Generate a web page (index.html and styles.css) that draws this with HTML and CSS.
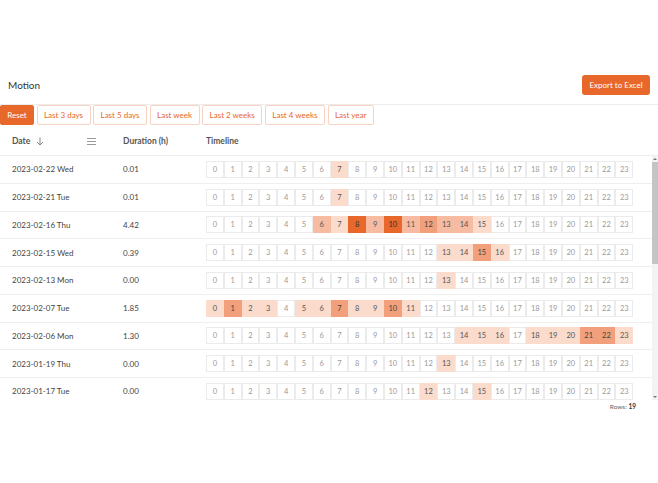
FILE: index.html
```html
<!DOCTYPE html>
<html lang="en">
<head>
<meta charset="UTF-8" />
<title>Motion</title>
<link rel="stylesheet" href="styles.css">
</head>
<body>

<div class="toolbar">
  <span class="title">Motion</span>
  <button class="export-btn">Export to Excel</button>
</div>

<div class="filters">
  <button class="filter active">Reset</button>
  <button class="filter">Last 3 days</button>
  <button class="filter">Last 5 days</button>
  <button class="filter">Last week</button>
  <button class="filter">Last 2 weeks</button>
  <button class="filter">Last 4 weeks</button>
  <button class="filter">Last year</button>
</div>

<div class="table">
  <div class="table-head">
    <div class="th th-date">
      <span>Date</span>
      <svg class="sort-icon" width="8" height="9" viewBox="0 0 8 9"><path d="M4 0.5V8M1 5l3 3 3-3" fill="none" stroke="#888" stroke-width="1"/></svg>
      <svg class="menu-icon" width="9" height="7" viewBox="0 0 9 7"><path d="M0 0.5h9M0 3.5h9M0 6.5h9" stroke="#999" stroke-width="1"/></svg>
    </div>
    <div class="th">Duration (h)</div>
    <div class="th">Timeline</div>
  </div>
  <div class="table-wrap">
    <div class="table-body" id="rows"></div>
    <div class="scrollbar">
      <span class="sb-arrow up"></span>
      <span class="sb-thumb"></span>
      <span class="sb-track"></span>
      <span class="sb-arrow down"></span>
    </div>
  </div>
</div>

<div class="footer">Rows: <b>19</b></div>

<script>
  // hour -> intensity level (1..4)
  const data = [
    ['2023-02-22 Wed', '0.01', {7: 1}],
    ['2023-02-21 Tue', '0.01', {7: 1}],
    ['2023-02-16 Thu', '4.42', {6: 2, 7: 1, 8: 4, 9: 2, 10: 4, 11: 2, 12: 3, 13: 2, 14: 2, 15: 1}],
    ['2023-02-15 Wed', '0.39', {13: 1, 14: 1, 15: 3, 16: 1}],
    ['2023-02-13 Mon', '0.00', {13: 1}],
    ['2023-02-07 Tue', '1.85', {0: 1, 1: 3, 2: 1, 3: 1, 5: 1, 6: 1, 7: 3, 8: 1, 9: 1, 10: 3, 11: 1}],
    ['2023-02-06 Mon', '1.30', {14: 1, 15: 1, 16: 1, 18: 1, 19: 1, 20: 1, 21: 3, 22: 3, 23: 1}],
    ['2023-01-19 Thu', '0.00', {13: 1}],
    ['2023-01-17 Tue', '0.00', {12: 1, 15: 1}],
    ['2023-01-16 Mon', '0.02', {9: 1}],
    ['2023-01-12 Thu', '0.00', {14: 1}],
    ['2023-01-10 Tue', '0.41', {8: 1, 9: 2, 10: 1}],
    ['2023-01-09 Mon', '0.00', {}],
    ['2023-01-05 Thu', '0.12', {16: 1, 17: 1}],
    ['2023-01-03 Tue', '0.00', {11: 1}],
    ['2022-12-29 Thu', '0.07', {13: 1, 14: 1}],
    ['2022-12-22 Thu', '0.00', {}],
    ['2022-12-20 Tue', '0.25', {7: 1, 8: 2}],
    ['2022-12-19 Mon', '0.00', {15: 1}]
  ];

  const body = document.getElementById('rows');
  data.forEach(([date, dur, hours]) => {
    let cells = '';
    for (let h = 0; h < 24; h++) {
      const lvl = hours[h] ? ' lvl' + hours[h] : '';
      cells += `<span class="hour${lvl}">${h}</span>`;
    }
    body.insertAdjacentHTML('beforeend',
      `<div class="row"><div class="td">${date}</div><div class="td">${dur}</div><div class="td"><div class="timeline">${cells}</div></div></div>`);
  });
</script>

</body>
</html>
```

FILE: styles.css
```css
* {
  box-sizing: border-box;
}

body {
  margin: 0;
  font-family: Lato, 'Open Sans', sans-serif;
  color: #444;
  background: #fff;
}

button {
  font-family: inherit;
  cursor: pointer;
}

/* Top bar */
.toolbar {
  margin-top: 66px;
  height: 39px;
  padding: 0 8px;
  display: flex;
  justify-content: space-between;
  align-items: center;
  border-bottom: 1px solid #ececec;
}

.title {
  font-size: 10px;
  color: #333;
}

.export-btn {
  width: 68px;
  height: 20px;
  background: #e8672a;
  color: #fff;
  border: none;
  border-radius: 3px;
  font-size: 8px;
  padding: 0;
}

/* Period filters */
.filters {
  display: flex;
  gap: 2.5px;
}

.filter {
  height: 20px;
  padding: 0 6.5px;
  background: #fff;
  color: #e8672a;
  border: 1px solid #f8d3c3;
  border-radius: 2px;
  font-size: 8px;
}

.filter.active {
  background: #e8672a;
  border-color: #e8672a;
  color: #fff;
  width: 34px;
  padding: 0;
}

/* Table */
.table-head,
.row {
  display: grid;
  grid-template-columns: 111px 83px 1fr;
  align-items: center;
  border-bottom: 1px solid #efefef;
}

.table-head {
  height: 31px;
}

.th,
.td {
  padding-left: 12px;
}

.th {
  font-size: 8.5px;
  font-weight: 700;
  color: #555;
  padding-top: 2px;
}

.th-date {
  display: flex;
  align-items: center;
}

.sort-icon {
  margin-left: 6px;
}

.menu-icon {
  margin-left: auto;
  margin-right: 15px;
}

.table-wrap {
  display: flex;
  height: 244px;
}

.table-body {
  flex: 1;
  overflow: hidden;
}

/* Scrollbar look-alike */
.scrollbar {
  width: 6px;
  display: flex;
  flex-direction: column;
  background: #f3f3f3;
}

.sb-arrow {
  height: 6px;
  display: flex;
  align-items: center;
  justify-content: center;
}

.sb-arrow::before {
  content: '';
  border-left: 2px solid transparent;
  border-right: 2px solid transparent;
}

.sb-arrow.up::before {
  border-bottom: 2px solid #777;
}

.sb-arrow.down::before {
  border-top: 2px solid #777;
}

.sb-thumb {
  height: 102px;
  background: #c4c4c4;
}

.sb-track {
  flex: 1;
}

.row {
  height: 27.75px;
}

.td {
  font-size: 8px;
  color: #444;
}

.timeline {
  display: flex;
}

.hour {
  width: 17.8px;
  height: 17px;
  border: 1px solid #ebebeb;
  display: flex;
  align-items: center;
  justify-content: center;
  font-size: 7.5px;
  color: #9a9a9a;
}

.hour.lvl1 { background: #fbdbcc; border-color: #fbdbcc; color: #555; }
.hour.lvl2 { background: #f6bba0; border-color: #f6bba0; color: #555; }
.hour.lvl3 { background: #f1a07b; border-color: #f1a07b; color: #444; }
.hour.lvl4 { background: #e8672a; border-color: #e8672a; color: #333; }

.footer {
  text-align: right;
  padding: 3px 22px 0 0;
  font-size: 6.5px;
  color: #666;
}

.footer b {
  color: #333;
}
```
